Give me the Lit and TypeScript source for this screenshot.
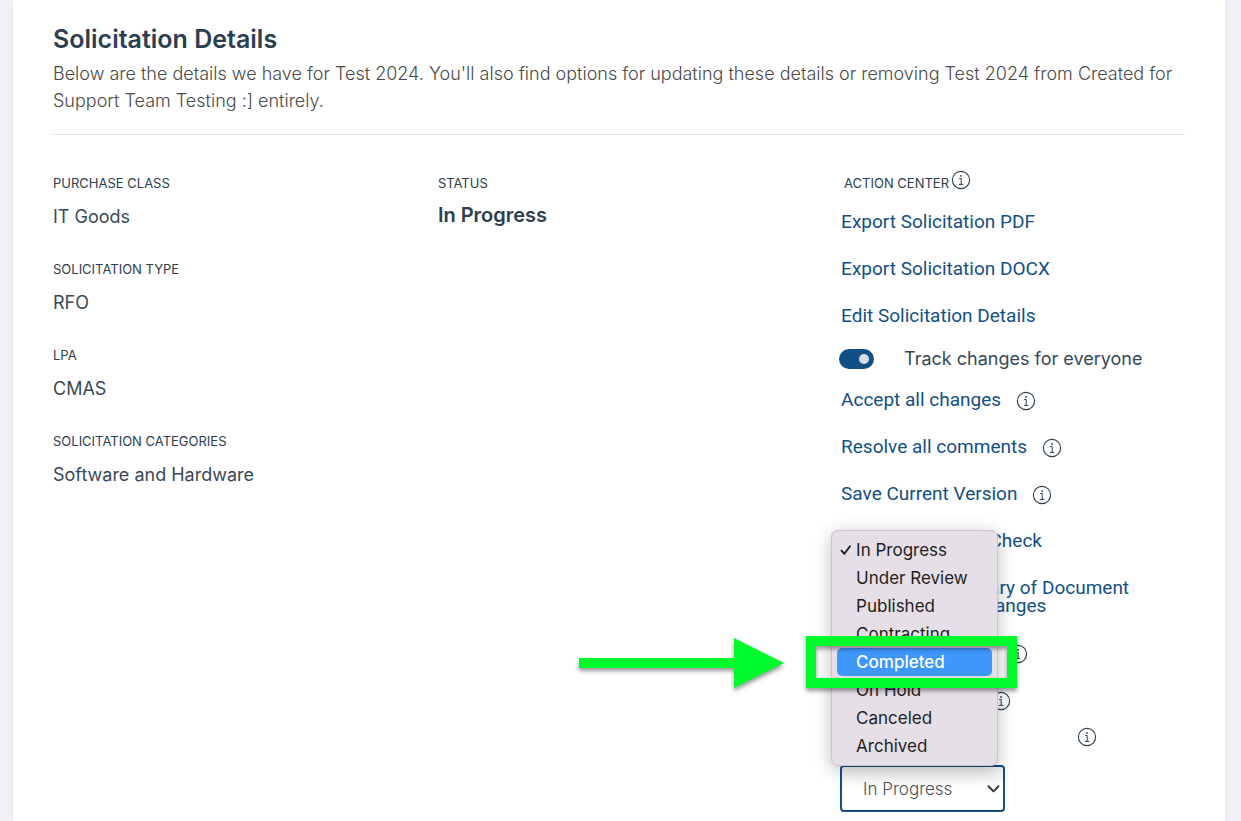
import { LitElement, html, css, svg, nothing } from "lit";
import { customElement, property, state } from "lit/decorators.js";
import { classMap } from "lit/directives/class-map.js";

@customElement("info-icon")
class InfoIcon extends LitElement {
  @property() label = "More information";

  static styles = css`
    :host {
      display: inline-flex;
      flex: none;
    }
    .info {
      display: block;
      padding: 0;
      border: 0;
      background: none;
      color: #2c3e50;
    }
    svg {
      display: block;
      width: 20px;
      height: 20px;
    }
  `;

  render() {
    return html`<button class="info" type="button" aria-label=${this.label}>
      <svg viewBox="0 0 20 20" fill="none" stroke="currentColor" stroke-width="1.1">
        <circle cx="10" cy="10" r="8.6" />
        <path d="M8.2 8.5h2v5.8M7.9 14.4h4.4" stroke-width="1" />
        <circle cx="10" cy="5.9" r="0.9" fill="currentColor" stroke="none" />
      </svg>
    </button>`;
  }
}

@customElement("app-root")
class AppRoot extends LitElement {
  @state() status = "In Progress";
  @state() highlighted = "Completed";

  private details = [
    ["Purchase Class", "IT Goods"],
    ["Solicitation Type", "RFO"],
    ["LPA", "CMAS"],
    ["Solicitation Categories", "Software and Hardware"],
  ];

  private exports = [
    "Export Solicitation PDF",
    "Export Solicitation DOCX",
    "Edit Solicitation Details",
  ];

  private actions = [
    { text: "Accept all changes", info: true },
    { text: "Resolve all comments", info: true },
    { text: "Save Current Version", info: true },
    { text: "Run Accessibility Check", info: false },
    { text: "Generate Summary of Document and Changes", info: false },
  ];

  private statuses = [
    "In Progress",
    "Under Review",
    "Published",
    "Contracting",
    "Completed",
    "On Hold",
    "Canceled",
    "Archived",
  ];

  static styles = css`
    :host {
      display: block;
      min-height: 100vh;
      box-sizing: border-box;
      padding: 0 16px 0 13px;
      background: #f0f2f8;
      color: #2c3e50;
      font-family: Inter, "Liberation Sans", sans-serif;
    }
    * {
      box-sizing: border-box;
    }
    .panel {
      min-height: 100vh;
      padding: 23px 40px 8px;
      background: #fff;
      box-shadow: 0 0 4px #dfe3ea;
    }
    h1 {
      margin: 0;
      font-size: 25px;
      line-height: 32px;
      font-weight: 600;
    }
    .intro {
      margin: 5px 0 0;
      padding-bottom: 20px;
      border-bottom: 1px solid #dee2e6;
      color: #4a4a4a;
      font-size: 18px;
      line-height: 27px;
      font-weight: 300;
    }
    .columns {
      display: grid;
      grid-template-columns: 34fr 35fr 31fr;
      padding-top: 35px;
    }
    dl {
      display: flex;
      flex-direction: column;
      gap: 25px;
      margin: 0;
    }
    dt,
    .caption {
      font-size: 13px;
      line-height: 26px;
      font-weight: 400;
      text-transform: uppercase;
    }
    dd {
      margin: 7px 0 0;
      color: #384858;
      font-size: 18px;
      line-height: 28px;
    }
    .strong {
      color: #2c3e50;
      font-size: 20px;
      line-height: 24px;
      font-weight: 600;
    }
    .center {
      padding-left: 5px;
    }
    .caption {
      display: flex;
      align-items: flex-start;
      gap: 2px;
      margin: 0 0 3px;
      padding-left: 5px;
    }
    .row {
      display: flex;
      align-items: center;
      gap: 15px;
    }
    .action {
      padding: 14px 0 15px 2px;
      border: 0;
      background: none;
      color: #124f87;
      font-family: Roboto, "Liberation Sans", sans-serif;
      font-size: 19px;
      line-height: 18px;
      text-align: center;
      text-decoration: none;
    }
    .action.wide {
      max-width: 302px;
    }
    .track {
      display: flex;
      align-items: center;
      gap: 30px;
      height: 37px;
      color: #384858;
      font-size: 18px;
    }
    .toggle {
      appearance: none;
      display: flex;
      align-items: center;
      justify-content: flex-end;
      width: 35px;
      height: 20px;
      margin: 0;
      padding: 0 5px;
      border-radius: 10px;
      background: #124f87;
    }
    .toggle::before {
      content: "";
      width: 10px;
      height: 10px;
      border-radius: 5px;
      background: #d8dde3;
    }
    .hint {
      display: flex;
      align-items: center;
      justify-content: flex-end;
      height: 47px;
    }
    .hint.first {
      width: 189px;
    }
    .hint.second {
      width: 172px;
    }
    .hint.last {
      width: 258px;
      height: 26px;
      margin-bottom: 15px;
    }
    .picker {
      position: relative;
      width: 165px;
      margin-left: 1px;
    }
    select {
      appearance: none;
      display: block;
      width: 100%;
      height: 47px;
      padding: 0 21px;
      border: 2px solid #124f87;
      border-radius: 4px;
      outline: none;
      background: linear-gradient(#f0f0f0, #fff 50%);
      color: #495057;
      font: 300 17px/24px Inter, sans-serif;
    }
    .chevron {
      position: absolute;
      right: 5px;
      top: 19px;
      width: 13px;
      height: 10px;
    }
    .menu {
      position: absolute;
      left: -9px;
      bottom: 46px;
      width: 167px;
      margin: 0;
      padding: 5px;
      border: 1px solid #c9c3ca;
      border-radius: 7px;
      background: #e6dfe7;
      box-shadow: 0 4px 18px rgba(0, 0, 0, 0.25);
      list-style: none;
      color: #1e1e1e;
      font-size: 17px;
      line-height: 28px;
    }
    .option {
      display: grid;
      grid-template-columns: 16px 1fr;
      align-items: center;
      column-gap: 3px;
      border-radius: 5px;
    }
    .option span {
      grid-column: 2;
      grid-row: 1;
    }
    .option svg {
      grid-column: 1;
      grid-row: 1;
      justify-self: end;
      width: 14px;
      height: 12px;
    }
    .option.active {
      background: #3e97fb;
      color: #fff;
      font-weight: 500;
    }
    .frame {
      position: absolute;
      left: -34px;
      bottom: 124px;
      width: 211px;
      height: 52px;
      border: 10px solid #00fb2d;
      filter: drop-shadow(0 3px 2px rgba(0, 0, 0, 0.4));
    }
    .arrow {
      position: absolute;
      right: 221px;
      bottom: 124px;
      width: 205px;
      height: 50px;
      filter: drop-shadow(0 3px 2px rgba(0, 0, 0, 0.4));
    }
  `;

  private check() {
    return svg`<svg viewBox="0 0 14 12" fill="none" stroke="currentColor" stroke-width="1.9"
      stroke-linecap="round" stroke-linejoin="round"><path d="M2.5 6.6 5.4 9.8 11 2.2" /></svg>`;
  }

  render() {
    return html`
      <main class="panel">
        <h1>Solicitation Details</h1>
        <p class="intro">
          Below are the details we have for Test 2024. You'll also find options for updating these
          details or removing Test 2024 from Created for Support Team Testing :] entirely.
        </p>
        <div class="columns">
          <dl>
            ${this.details.map(([k, v]) => html`<div><dt>${k}</dt><dd>${v}</dd></div>`)}
          </dl>
          <dl>
            <div><dt>Status</dt><dd class="strong">${this.status}</dd></div>
          </dl>
          <section class="center">
            <h2 class="caption">
              Action Center <info-icon label="About the action center"></info-icon>
            </h2>
            ${this.exports.map((t) => html`<div class="row"><a class="action" href="#">${t}</a></div>`)}
            <label class="track">
              <input class="toggle" type="checkbox" role="switch" checked />
              Track changes for everyone
            </label>
            ${this.actions.map(
              (a) => html`<div class="row">
                <button class=${classMap({ action: true, wide: a.text.length > 30 })} type="button">
                  ${a.text}
                </button>
                ${a.info ? html`<info-icon label=${"About " + a.text}></info-icon>` : nothing}
              </div>`
            )}
            <div class="hint first"><info-icon></info-icon></div>
            <div class="hint second"><info-icon></info-icon></div>
            <div class="hint last"><info-icon label="About statuses"></info-icon></div>
            <div class="picker">
              <select aria-label="Status">
                ${this.statuses.map((s) => html`<option ?selected=${s === this.status}>${s}</option>`)}
              </select>
              <svg class="chevron" viewBox="0 0 13 10" fill="none" stroke="#343a40" stroke-width="2">
                <path d="M1.5 2.2 6.5 7.4 11.5 2.2" stroke-linecap="round" stroke-linejoin="round" />
              </svg>
              <ul class="menu" role="listbox" aria-label="Status options">
                ${this.statuses.map(
                  (s) => html`<li
                    class=${classMap({ option: true, active: s === this.highlighted })}
                    role="option"
                    aria-selected=${s === this.status}
                  >
                    ${s === this.status ? this.check() : nothing}<span>${s}</span>
                  </li>`
                )}
              </ul>
              <div class="frame"></div>
              <svg class="arrow" viewBox="0 0 205 50" fill="#00fb2d" aria-hidden="true">
                <path d="M0 20h155V0l50 25-50 25V30H0z" />
              </svg>
            </div>
          </section>
        </div>
      </main>
    `;
  }
}
